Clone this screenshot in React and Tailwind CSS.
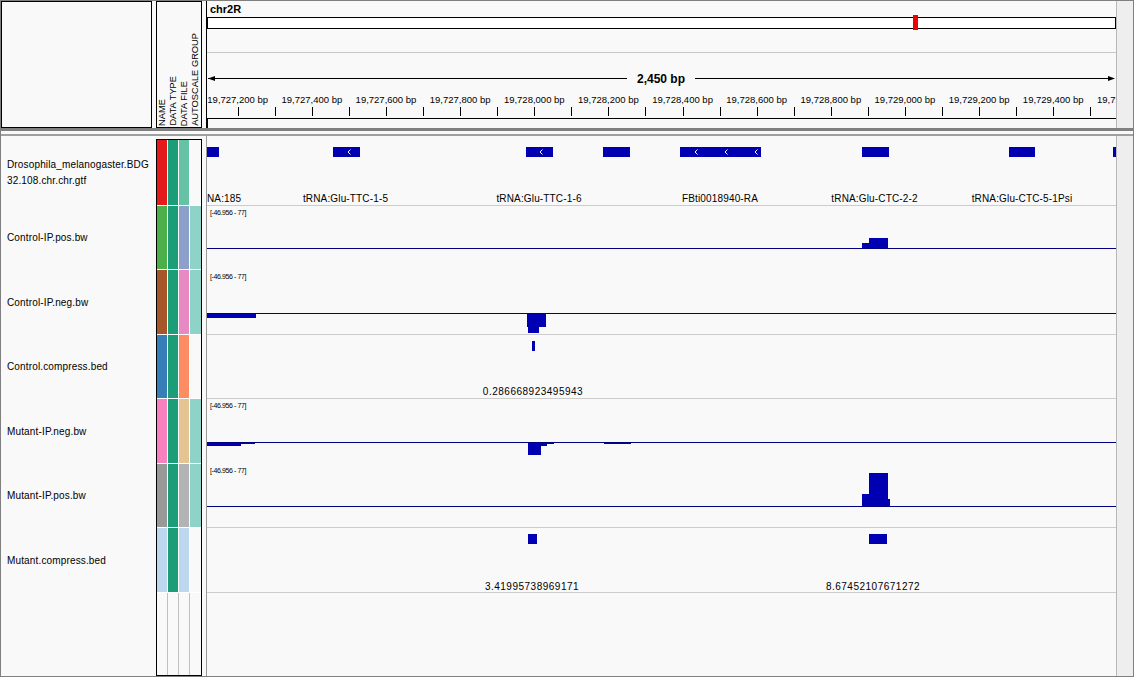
import React from "react";

const BLUE = "#0000b2";
const NAVY = "#000080";
const SEP = "#cccccc";
const W = 909;

const fmt = (n) => n.toString().replace(/\B(?=(\d{3})+(?!\d))/g, ",");

function Ruler() {
  const ticks = Array.from({ length: 24 }, (_, i) => Math.round(30.7 + 37.07 * i) + 0.5);
  const labels = Array.from({ length: 13 }, (_, k) => ({
    x: 30.7 + 74.14 * k,
    t: fmt(19727200 + 200 * k) + " bp",
  }));
  return (
    <svg width={W} height={127} className="block">
      <text x="3" y="12" fontSize="11" fontWeight="bold">chr2R</text>
      <rect x="0.5" y="16.5" width={W - 1} height="11" fill="white" stroke="black" shapeRendering="crispEdges" />
      <rect x="706" y="14" width="5" height="15" fill="#ee0000" shapeRendering="crispEdges" />
      <rect x="0" y="51" width={W} height="1" fill="#c8c8c8" shapeRendering="crispEdges" />
      <rect x="1" y="77" width="419" height="1" fill="black" shapeRendering="crispEdges" />
      <rect x="488" y="77" width="419" height="1" fill="black" shapeRendering="crispEdges" />
      <polygon points="1,77.5 8,75 8,80" fill="black" />
      <polygon points="908,77.5 901,75 901,80" fill="black" />
      <text x="454" y="82" fontSize="12" fontWeight="bold" textAnchor="middle">2,450 bp</text>
      {labels.map((l) => (
        <text key={l.t} x={l.x} y="102" fontSize="9.5" textAnchor="middle">{l.t}</text>
      ))}
      {ticks.map((x) => (
        <line key={x} x1={x} x2={x} y1="106" y2="115" stroke="black" shapeRendering="crispEdges" />
      ))}
      <rect x="0" y="117" width={W} height="1" fill="black" shapeRendering="crispEdges" />
      <rect x="0" y="117" width="1" height="10" fill="black" shapeRendering="crispEdges" />
    </svg>
  );
}

function Bars({ list }) {
  return list.map(([x, y, w, h], i) => (
    <rect key={i} x={x} y={y} width={w} height={h} fill={BLUE} shapeRendering="crispEdges" />
  ));
}
function Range() {
  return (
    <text x="3" y="9" fontSize="7" letterSpacing="-0.4">[-46.956 - 77]</text>
  );
}
function Baseline({ y }) {
  return <rect x="0" y={y} width={W} height="1" fill={NAVY} shapeRendering="crispEdges" />;
}
function Chevron({ x }) {
  return (
    <polyline points={`${x + 1.5},9.5 ${x - 1},12 ${x + 1.5},14.5`} fill="none" stroke="white" strokeWidth="1" />
  );
}
function Label({ x, y, children, anchor = "middle", ls = "0.15" }) {
  return (
    <text x={x} y={y} fontSize="10" textAnchor={anchor} letterSpacing={ls}>{children}</text>
  );
}

const tracks = [
  {
    h: 66,
    hc: "h-[66px]",
    names: ["Drosophila_melanogaster.BDG", "32.108.chr.chr.gtf"],
    cells: ["bg-[#e41a1c]", "bg-[#1b9e77]", "bg-[#66c2a5]", "bg-[#f9f9f9]"],
    sep: true,
    body: (
      <>
        <Bars list={[[0, 7, 12, 10], [126, 7, 27, 10], [319, 7, 27, 10], [396, 7, 27, 10], [473, 7, 81, 10], [655, 7, 27, 10], [802, 7, 26, 10], [906, 7, 3, 10]]} />
        {[142, 334, 489, 519, 549].map((x) => <Chevron key={x} x={x} />)}
        <Label x={0} y={62} anchor="start">NA:185</Label>
        <Label x={138.5} y={62}>tRNA:Glu-TTC-1-5</Label>
        <Label x={332} y={62}>tRNA:Glu-TTC-1-6</Label>
        <Label x={513} y={62}>FBti0018940-RA</Label>
        <Label x={667.5} y={62}>tRNA:Glu-CTC-2-2</Label>
        <Label x={815} y={62}>tRNA:Glu-CTC-5-1Psi</Label>
      </>
    ),
  },
  {
    h: 64,
    hc: "h-[64px]",
    names: ["Control-IP.pos.bw"],
    cells: ["bg-[#4daf4a]", "bg-[#1b9e77]", "bg-[#8da0cb]", "bg-[#8dd3c7]"],
    sep: false,
    body: (
      <>
        <Range />
        <Bars list={[[655, 37, 7, 5], [662, 32, 19, 10]]} />
        <Baseline y={42} />
      </>
    ),
  },
  {
    h: 65,
    hc: "h-[65px]",
    names: ["Control-IP.neg.bw"],
    cells: ["bg-[#a65628]", "bg-[#1b9e77]", "bg-[#e78ac3]", "bg-[#8dd3c7]"],
    sep: true,
    body: (
      <>
        <Range />
        <Bars list={[[0, 43, 49, 5], [320, 43, 19, 14], [321, 57, 11, 6]]} />
        <Baseline y={43} />
      </>
    ),
  },
  {
    h: 64,
    hc: "h-[64px]",
    names: ["Control.compress.bed"],
    cells: ["bg-[#377eb8]", "bg-[#1b9e77]", "bg-[#fc8d62]", "bg-[#f9f9f9]"],
    sep: true,
    body: (
      <>
        <Bars list={[[325, 6, 3, 10]]} />
        <Label x={326} y={60} ls="0.5">0.286668923495943</Label>
      </>
    ),
  },
  {
    h: 65,
    hc: "h-[65px]",
    names: ["Mutant-IP.neg.bw"],
    cells: ["bg-[#f781bf]", "bg-[#1b9e77]", "bg-[#e5c494]", "bg-[#8dd3c7]"],
    sep: false,
    body: (
      <>
        <Range />
        <Bars list={[[0, 43, 34, 4], [34, 43, 14, 2], [321, 43, 13, 13], [334, 43, 6, 4], [340, 43, 7, 2], [397, 43, 27, 2]]} />
        <Baseline y={43} />
      </>
    ),
  },
  {
    h: 64,
    hc: "h-[64px]",
    names: ["Mutant-IP.pos.bw"],
    cells: ["bg-[#999999]", "bg-[#1b9e77]", "bg-[#b3b3b3]", "bg-[#8dd3c7]"],
    sep: true,
    body: (
      <>
        <Range />
        <Bars list={[[655, 30, 7, 12], [662, 9, 19, 33], [681, 35, 2, 7]]} />
        <Baseline y={42} />
      </>
    ),
  },
  {
    h: 65,
    hc: "h-[65px]",
    names: ["Mutant.compress.bed"],
    cells: ["bg-[#bdd7ee]", "bg-[#1b9e77]", "bg-[#bdd7ee]", "bg-[#f9f9f9]"],
    sep: true,
    body: (
      <>
        <Bars list={[[321, 6, 9, 10], [662, 6, 18, 10]]} />
        <Label x={325} y={62} ls="0.5">3.41995738969171</Label>
        <Label x={666} y={62} ls="0.5">8.67452107671272</Label>
      </>
    ),
  },
];

export default function App() {
  return (
    <div className="w-[1134px] h-[677px] overflow-hidden bg-[#f9f9f9] border border-[#808080] flex flex-col text-black font-['Liberation_Sans',Arial,sans-serif]">
      {/* header */}
      <div className="h-[127px] flex shrink-0">
        <div className="w-[151px] border border-black" />
        <div className="w-[4px]" />
        <div className="w-[46px] border border-black flex items-end pb-[1px]">
          {["NAME", "DATA TYPE", "DATA FILE", "AUTOSCALE GROUP"].map((t) => (
            <div
              key={t}
              className="w-[11px] [writing-mode:vertical-rl] rotate-180 text-[9.3px] leading-[11px] whitespace-nowrap"
            >
              {t}
            </div>
          ))}
        </div>
        <div className="w-[4px]" />
        <div className="w-[910px] border-l border-black overflow-hidden">
          <Ruler />
        </div>
        <div className="flex-1 bg-[#eeeeee] border-l border-[#b8b8b8]" />
      </div>

      {/* divider */}
      <div className="h-[3px] bg-[#808080] shrink-0" />
      <div className="h-[3px] shrink-0" />
      <div className="h-[2px] bg-[#a0a0a0] shrink-0" />

      {/* body */}
      <div className="flex-1 flex min-h-0">
        <div className="w-[151px] pt-[4px] flex flex-col">
          {tracks.map((t) => (
            <div key={t.names[0]} className={`${t.hc} flex flex-col justify-center pl-[6px] text-[10px] leading-[16px] tracking-[0.15px] whitespace-nowrap`}>
              {t.names.map((n) => (
                <div key={n}>{n}</div>
              ))}
            </div>
          ))}
        </div>
        <div className="w-[4px]" />
        <div className="w-[46px] mt-[3px] border border-black flex flex-col">
          {tracks.map((t) => (
            <div key={t.names[0]} className={`${t.hc} flex border-b border-white`}>
              {t.cells.map((c, i) => (
                <div key={i} className={`${c} ${i < 3 ? "w-[11px] border-r border-white" : "flex-1"}`} />
              ))}
            </div>
          ))}
          <div className="flex-1 flex">
            <div className="w-[11px] border-r border-[#c0c0c0]" />
            <div className="w-[11px] border-r border-[#c0c0c0]" />
            <div className="w-[11px] border-r border-[#c0c0c0]" />
            <div className="flex-1" />
          </div>
        </div>
        <div className="w-[4px]" />
        <div className="w-[910px] border-l border-[#9a9a9a] pt-[4px] flex flex-col overflow-hidden">
          {tracks.map((t) => (
            <svg key={t.names[0]} width={W} height={t.h} className="block shrink-0">
              {t.body}
              {t.sep && <rect x="0" y={t.h - 1} width={W} height="1" fill={SEP} shapeRendering="crispEdges" />}
            </svg>
          ))}
        </div>
        <div className="flex-1 bg-[#eeeeee] border-l border-[#b8b8b8]" />
      </div>
    </div>
  );
}
